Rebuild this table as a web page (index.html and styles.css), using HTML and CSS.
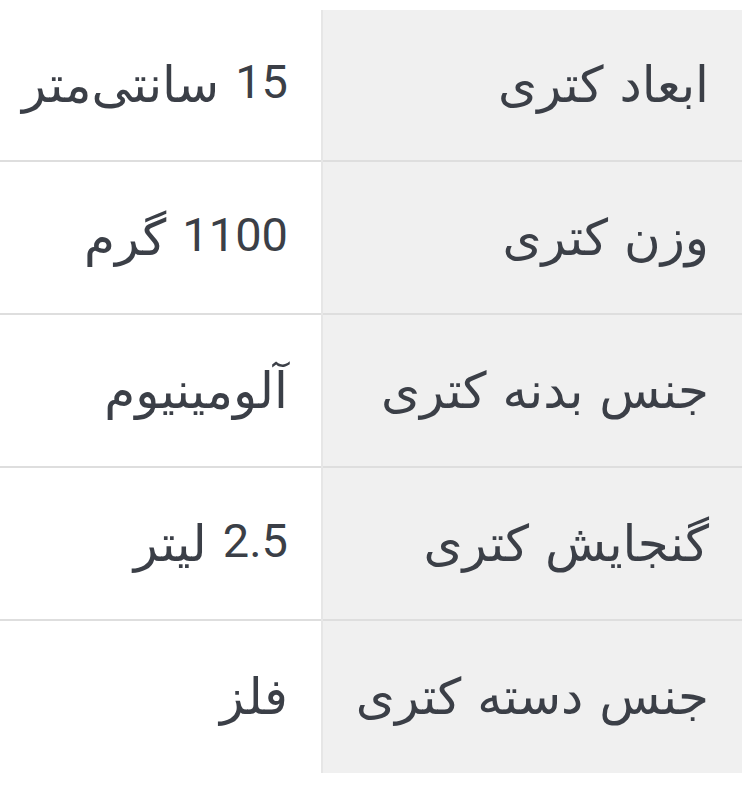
FILE: index.html
```html
<!DOCTYPE html>
<html lang="fa" dir="rtl">
<head>
<meta charset="utf-8">
<link rel="stylesheet" href="styles.css">
</head>
<body>
<table class="specs">
<colgroup><col class="col-label"><col class="col-value"></colgroup>
<tbody>
<tr><th class="label">ابعاد کتری</th><td class="value"><span class="num">15</span> سانتی‌متر</td></tr>
<tr><th class="label">وزن کتری</th><td class="value"><span class="num">1100</span> گرم</td></tr>
<tr><th class="label">جنس بدنه کتری</th><td class="value">آلومینیوم</td></tr>
<tr><th class="label">گنجایش کتری</th><td class="value"><span class="num">2.5</span> لیتر</td></tr>
<tr><th class="label">جنس دسته کتری</th><td class="value">فلز</td></tr>
</tbody>
</table>
</body>
</html>
```
FILE: styles.css
```css
html, body {
  margin: 0;
  padding: 0;
  background: #fff;
}
body {
  direction: rtl;
  padding: 10px 8px 0 0;
  font-family: "DejaVu Sans", sans-serif;
  color: #3b3f47;
}
.specs {
  width: 742px;
  table-layout: fixed;
  border-collapse: collapse;
  border-spacing: 0;
}
.col-label { width: 420px; }
.col-value { width: 322px; }
.specs tr + tr th,
.specs tr + tr td {
  border-top: 2px solid #dedede;
  height: 153px;
}
.label,
.value {
  height: 151px;
  padding: 0 33px 0 0;
  box-sizing: border-box;
  font-size: 50px;
  font-weight: normal;
  text-align: right;
  vertical-align: middle;
  line-height: 1.2;
  white-space: nowrap;
  overflow: hidden;
}
.label {
  background: #f0f0f0;
  border-left: 2px solid #e6e6e6;
}
.value {
  background: #fff;
}
.num {
  font-family: Roboto, sans-serif;
  font-size: 47px;
  position: relative;
  top: -4px;
}
```
